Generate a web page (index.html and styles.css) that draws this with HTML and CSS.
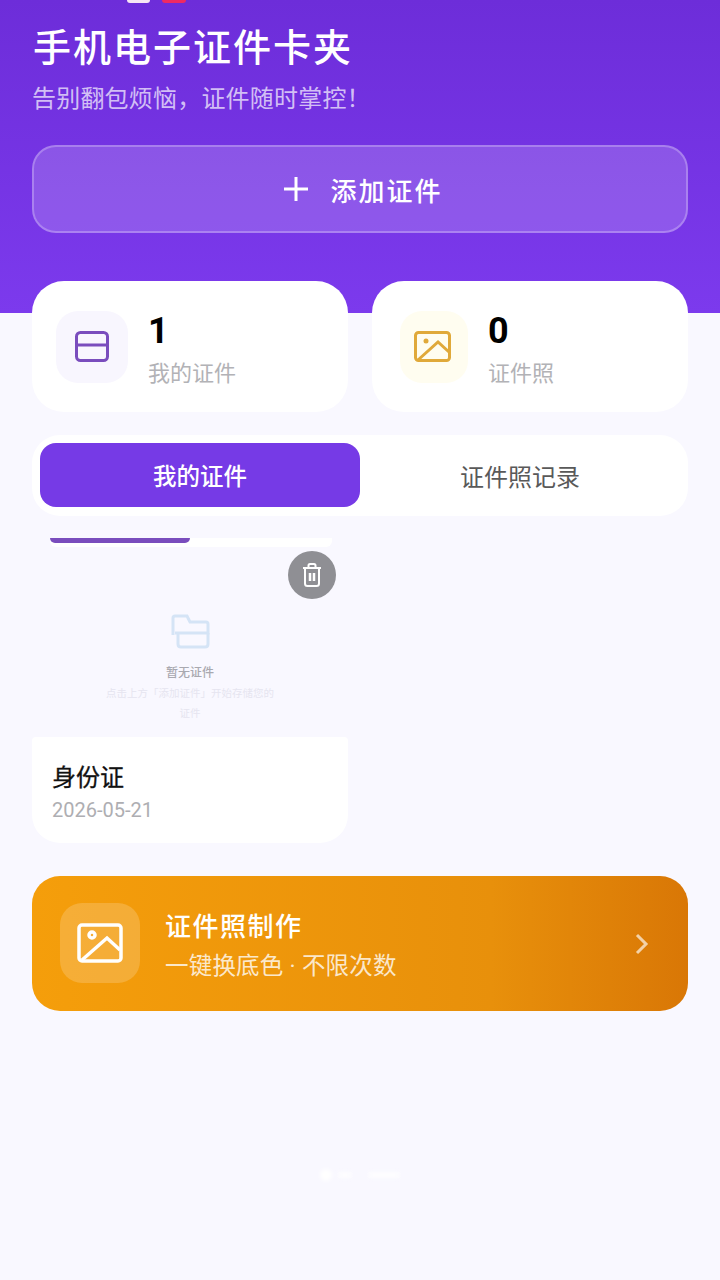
FILE: index.html
```html
<!DOCTYPE html>
<html lang="zh-CN">
<head>
  <meta charset="UTF-8" />
  <meta name="viewport" content="width=device-width, initial-scale=1" />
  <title>手机电子证件卡夹</title>
  <link rel="stylesheet" href="styles.css">
</head>
<body>

  <!-- Header -->
  <header class="hero">
    <div class="status-strip">
      <span class="status-white"></span>
      <span class="status-red"></span>
    </div>
    <h1>手机电子证件卡夹</h1>
    <p class="hero-sub">告别翻包烦恼，证件随时掌控！</p>
    <button class="add-btn" type="button">
      <svg width="24" height="24" viewBox="0 0 24 24" fill="none" stroke="#fff" stroke-width="3"><path d="M12 0v24M0 12h24"/></svg>
      <span>添加证件</span>
    </button>
  </header>

  <!-- Stats -->
  <section class="stats">
    <div class="stat-card">
      <div class="stat-icon stat-icon-purple">
        <svg width="34" height="31" viewBox="0 0 34 31" fill="none" stroke="#7a4dbd" stroke-width="3"><rect x="1.5" y="1.5" width="31" height="28" rx="4"/><path d="M1.5 14h31"/></svg>
      </div>
      <div>
        <div class="stat-num">1</div>
        <div class="stat-label">我的证件</div>
      </div>
    </div>
    <div class="stat-card stat-card-photo">
      <div class="stat-icon stat-icon-yellow">
        <svg width="37" height="31" viewBox="0 0 37 31" fill="none" stroke="#e0a93a" stroke-width="3"><rect x="1.5" y="1.5" width="34" height="28" rx="3"/><circle cx="12" cy="10" r="2.5" fill="#e0a93a" stroke="none"/><path d="M4 29 L24 11 L35 21"/></svg>
      </div>
      <div>
        <div class="stat-num">0</div>
        <div class="stat-label">证件照</div>
      </div>
    </div>
  </section>

  <!-- Tabs -->
  <nav class="tabs">
    <div class="tab tab-active">我的证件</div>
    <div class="tab">证件照记录</div>
  </nav>

  <!-- Cards -->
  <section class="cert-grid">
    <article class="cert-card">
      <div class="cert-preview">
        <div class="mini-bar"><span class="mini-bar-fill"></span></div>
        <button class="delete-btn" type="button">
          <svg width="20" height="24" viewBox="0 0 20 24" fill="none" stroke="#fff" stroke-width="2"><path d="M1 5h18M6.500 5V2.500q0-1.500 1.500-1.500h4q1.500 0 1.500 1.500V5M3 5v15.500q0 2.500 2.500 2.500h9q2.500 0 2.500-2.500V5"/><path d="M8 10v8M12 10v8" stroke-width="2.500"/></svg>
        </button>
        <svg class="folder-icon" width="40" height="35" viewBox="0 0 40 35" fill="none" stroke="#d5e4f6" stroke-width="3"><path d="M3 21V4q0-2 2-2h12l3 6h16q2 0 2 2v9H5"/><path d="M8 19v11q0 3 3 3h24q3 0 3-3V19"/></svg>
        <div class="empty-title">暂无证件</div>
        <div class="empty-text">点击上方「添加证件」开始存储您的<br>证件</div>
      </div>
      <div class="cert-body">
        <div class="cert-name">身份证</div>
        <div class="cert-date">2026-05-21</div>
      </div>
    </article>
  </section>

  <!-- Banner -->
  <section class="banner">
    <div class="banner-icon">
      <svg width="46" height="40" viewBox="0 0 46 40" fill="none" stroke="#fff" stroke-width="3.500"><rect x="2" y="2" width="42" height="36" rx="3"/><circle cx="15" cy="12" r="3"/><path d="M5 37 L30 15 L43 27"/></svg>
    </div>
    <div class="banner-text">
      <div class="banner-title">证件照制作</div>
      <div class="banner-sub">一键换底色<span class="banner-sep"> · </span>不限次数</div>
    </div>
    <svg class="banner-arrow" width="14" height="22" viewBox="0 0 14 22" fill="none" stroke="#fff" stroke-opacity="0.65" stroke-width="3"><path d="M2 2l9 9-9 9"/></svg>
  </section>

  <div class="dots">
    <span class="dot-group"><i class="dot-round"></i><i class="dot-line"></i></span>
    <span class="dot-group"><i class="dot-line dot-line-long"></i></span>
  </div>

</body>
</html>
```

FILE: styles.css
```css
* { margin:0; padding:0; box-sizing: border-box; font-family: 'Noto Sans CJK SC', 'Noto Sans', sans-serif; }
body {
  width: 720px;
  height: 1280px;
  overflow: hidden;
  background: #f9f8ff;
}
button { border: none; cursor: pointer; }

.hero {
  height: 313px;
  padding: 0 32px;
  background: linear-gradient(180deg, #6d2dd9, #7c3aed);
  color: #fff;
}
.status-strip {
  display: flex;
  gap: 12px;
  height: 3px;
  padding-left: 95px;
}
.status-white { width: 23px; background: #f6e6f4; border-radius: 0 0 4px 4px; }
.status-red { width: 24px; background: #ee2a62; border-radius: 0 0 10px 10px; }
h1 {
  margin-top: 15px;
  font-size: 38px;
  line-height: 54px;
  font-weight: 500;
  letter-spacing: 2px;
  padding-left: 1px;
}
.hero-sub {
  margin-top: 8px;
  font-size: 24px;
  line-height: 34px;
  letter-spacing: 0.200px;
  color: rgba(255,255,255,0.7);
}
.add-btn {
  display: flex;
  justify-content: center;
  align-items: center;
  gap: 22px;
  width: 100%;
  height: 88px;
  margin-top: 31px;
  padding-left: 7px;
  border: 2px solid rgba(255,255,255,0.25);
  border-radius: 24px;
  background: rgba(255,255,255,0.17);
  color: #fff;
  font-size: 26px;
  font-weight: 500;
  letter-spacing: 2px;
}

.stats {
  display: grid;
  grid-template-columns: 1fr 1fr;
  gap: 24px;
  margin-top: -32px;
  padding: 0 32px;
}
.stat-card {
  display: flex;
  align-items: center;
  gap: 20px;
  height: 131px;
  padding-left: 24px;
  background: #fff;
  border-radius: 32px;
}
.stat-card-photo { padding-left: 28px; }
.stat-icon {
  display: flex;
  justify-content: center;
  align-items: center;
  width: 72px;
  height: 72px;
  border-radius: 22px;
}
.stat-icon-purple { background: #f8f6fe; }
.stat-icon-yellow { width: 68px; padding-right: 4px; background: #fffdf0; }
.stat-num {
  font-family: 'Roboto', sans-serif;
  font-size: 36px;
  line-height: 42px;
  font-weight: 700;
  color: #000;
  padding-top: 4px;
}
.stat-label {
  margin-top: 2px;
  font-size: 22px;
  line-height: 34px;
  color: #b2b2b6;
}

.tabs {
  display: grid;
  grid-template-columns: 1fr 1fr;
  height: 81px;
  margin: 23px 32px 0;
  padding: 8px 8px 9px;
  background: #fff;
  border-radius: 28px;
}
.tab {
  display: flex;
  justify-content: center;
  align-items: center;
  border-radius: 16px;
  font-size: 24px;
  color: #595959;
}
.tab-active {
  background: #763ae6;
  color: #fff;
  font-size: 23.500px;
  font-weight: 500;
}

.cert-grid {
  display: grid;
  grid-template-columns: 316px;
  margin-top: 22px;
  padding: 0 32px;
}
.cert-preview {
  position: relative;
  display: flex;
  flex-direction: column;
  align-items: center;
  height: 199px;
}
.mini-bar {
  align-self: stretch;
  height: 9px;
  margin: 0 16px 0 18px;
  background: #fff;
  border-radius: 0 0 6px 6px;
}
.mini-bar-fill {
  display: block;
  width: 140px;
  height: 5px;
  background: #7a4dbd;
  border-radius: 0 0 6px 6px;
}
.delete-btn {
  position: absolute;
  top: 13px;
  right: 12px;
  display: flex;
  justify-content: center;
  align-items: center;
  width: 48px;
  height: 48px;
  border-radius: 50%;
  background: #8f8f94;
}
.folder-icon { margin-top: 67px; }
.empty-title {
  margin-top: 13px;
  font-size: 12px;
  line-height: 20px;
  font-weight: 500;
  color: #a9a9b0;
}
.empty-text {
  margin-top: 1px;
  font-size: 10.500px;
  line-height: 20px;
  text-align: center;
  color: #e6e5f0;
}
.cert-body {
  height: 106px;
  padding: 21px 20px 0;
  background: #fff;
  border-radius: 4px 4px 28px 28px;
}
.cert-name {
  font-size: 24px;
  line-height: 36px;
  color: #111;
  -webkit-text-stroke: 0.3px #111;
}
.cert-date {
  font-family: 'Roboto', sans-serif;
  margin-top: 1px;
  font-size: 20px;
  line-height: 30px;
  color: #aeaeb2;
}

.banner {
  display: flex;
  align-items: center;
  height: 135px;
  margin: 33px 32px 0;
  padding: 0 39px 0 28px;
  background: linear-gradient(90deg, #f59e0b, #e8900b 70%, #d97706);
  border-radius: 28px;
  color: #fff;
}
.banner-icon {
  display: flex;
  justify-content: center;
  align-items: center;
  width: 80px;
  height: 80px;
  margin-bottom: 1px;
  border-radius: 22px;
  background: rgba(255,255,255,0.18);
}
.banner-text { flex: 1; margin-left: 25px; padding-top: 2px; }
.banner-title {
  font-size: 26px;
  line-height: 38px;
  font-weight: 500;
  letter-spacing: 1.500px;
}
.banner-sub {
  margin-top: 2px;
  font-size: 23.500px;
  line-height: 36px;
  letter-spacing: 0.200px;
  white-space: nowrap;
  color: rgba(255,255,255,0.8);
}
.banner-sep { font-family: 'Roboto', sans-serif; }

.dots {
  display: flex;
  justify-content: center;
  gap: 16px;
  margin-top: 157px;
  filter: blur(2px);
}
.dot-group { display: flex; align-items: center; gap: 6px; height: 14px; }
.dot-round { width: 12px; height: 12px; border-radius: 50%; background: #fff; }
.dot-line { width: 14px; height: 6px; background: #fdfdff; }
.dot-line-long { width: 32px; }
```
